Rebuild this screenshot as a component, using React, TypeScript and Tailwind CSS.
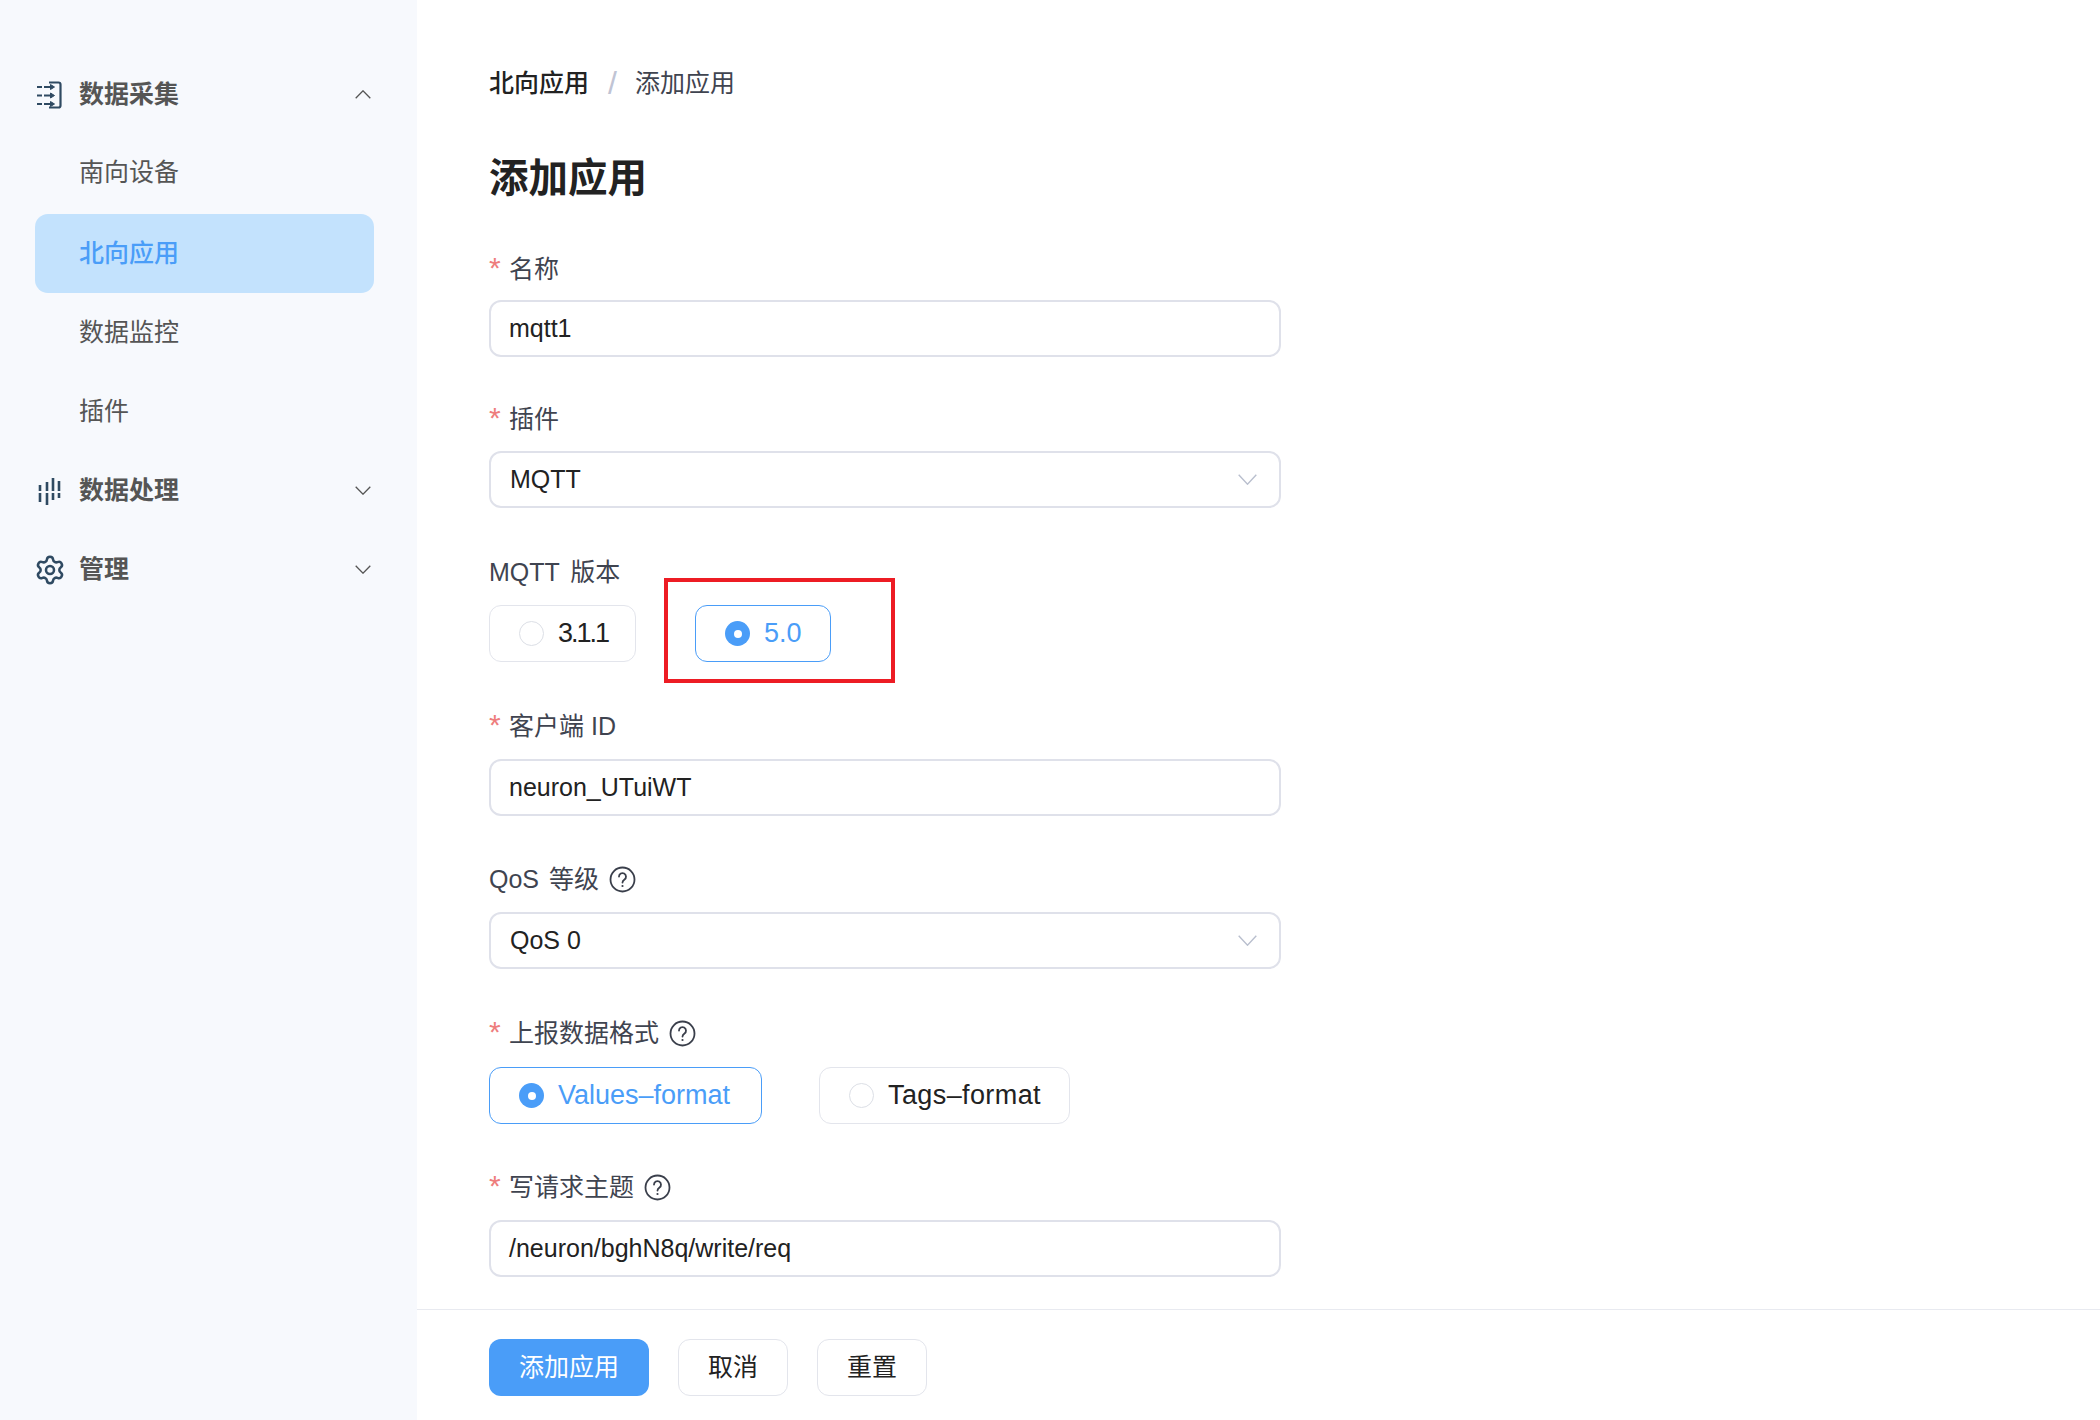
import React from "react";
import { Settings } from "lucide-react";

const font = "font-['Liberation_Sans','Noto_Sans_CJK_SC',sans-serif]";

function ListIcon() {
  return (
    <svg width="28" height="28" viewBox="0 0 28 28" fill="none" stroke="#2f4a62" strokeWidth="2.200" className="ml-px">
      <path d="M13 1.500h9.500a2 2 0 0 1 2 2v21a2 2 0 0 1-2 2H13" />
      <path d="M1 6h5M8 6h6M1 14.500h5M8 14.500h6M1 23h5M8 23h6" />
      <path d="M14.500 3.500l4 2.500-4 2.500zM14.500 12l4 2.500-4 2.500zM14.500 20.500l4 2.500-4 2.500z" fill="#2f4a62" strokeWidth="1" />
    </svg>
  );
}

function BarsIcon() {
  return (
    <svg width="28" height="28" viewBox="0 0 28 28" fill="none" stroke="#2f4a62" strokeWidth="2.600" className="ml-px">
      <path d="M4 8v6M4 16v9M11 5v9M11 16v12M17 1v13M17 16v7M23 4v10M23 16v5" />
    </svg>
  );
}

function Chevron({ up, color, w, h, sw }: { up?: boolean; color: string; w: number; h: number; sw: number }) {
  return (
    <svg width={w} height={h} viewBox={`0 0 ${w} ${h}`} fill="none" stroke={color} strokeWidth={sw}>
      <path d={up ? `M0.700 ${h - 0.700}L${w / 2} 0.800L${w - 0.700} ${h - 0.700}` : `M0.700 0.700L${w / 2} ${h - 0.800}L${w - 0.700} 0.700`} />
    </svg>
  );
}

function Help() {
  return (
    <svg width="27" height="27" viewBox="0 0 27 27" fill="none" stroke="#3a3f4b" strokeWidth="1.800" className="ml-[10px]">
      <circle cx="13.500" cy="13.500" r="12" />
      <path d="M10 10.500a3.500 3.500 0 1 1 5.500 3c-1.300.9-2 1.600-2 3" strokeLinecap="round" />
      <circle cx="13.500" cy="20" r="1.100" fill="#3a3f4b" stroke="none" />
    </svg>
  );
}

function NavGroup({ icon, title, open }: { icon: React.ReactNode; title: string; open?: boolean }) {
  return (
    <div className="flex h-[79px] items-center pl-[35px] pr-[46px]">
      <div className="flex w-[44px] items-center">{icon}</div>
      <span className="flex-1 text-[25px] font-bold leading-none text-[#555555]">{title}</span>
      <Chevron up={open} color="#555555" w={16} h={9} sw={1.300} />
    </div>
  );
}

function NavItem({ title, active }: { title: string; active?: boolean }) {
  return (
    <div
      className={
        active
          ? "ml-[35px] mr-[43px] flex h-[79px] items-center rounded-[13px] bg-[#c3e2fd] pl-[44px] text-[25px] font-medium text-[#4a9df8]"
          : "ml-[35px] mr-[43px] flex h-[79px] items-center pl-[44px] text-[25px] text-[#555555]"
      }
    >
      {title}
    </div>
  );
}

function Label({ text, required, help, className }: { text: string; required?: boolean; help?: boolean; className?: string }) {
  return (
    <div className={"flex h-[32px] items-center text-[25px] leading-none text-[#3f4450] " + (className ?? "")}>
      {required && <span className="mr-[7px] w-[13px] translate-y-[-1px] text-[30px] leading-none text-[#ee7d7d]">*</span>}
      <span>{text}</span>
      {help && <Help />}
    </div>
  );
}

function Input({ value }: { value: string }) {
  return (
    <div className="flex h-[57px] w-[792px] items-center rounded-[12px] border-2 border-[#dfe1ea] bg-white pl-[18px] text-[25px] text-[#222222]">
      {value}
    </div>
  );
}

function Select({ value }: { value: string }) {
  return (
    <div className="flex h-[57px] w-[792px] items-center justify-between rounded-[12px] border-2 border-[#dfe1ea] bg-white pl-[19px] pr-[22px] text-[25px] text-[#222222]">
      <span>{value}</span>
      <Chevron color="#b9bfce" w={19} h={11} sw={1.400} />
    </div>
  );
}

function Radio({ label, checked, className }: { label: string; checked?: boolean; className: string }) {
  return (
    <div
      className={
        "flex h-[57px] items-center rounded-[12px] border pl-[29px] text-[27px] " +
        (checked ? "border-[#4a9df8] text-[#4a9df8] " : "border-[#e3e5ec] text-[#222222] ") +
        className
      }
    >
      {checked ? (
        <span className="mr-[14px] flex h-[25px] w-[25px] items-center justify-center rounded-full bg-[#4a9df8]">
          <span className="h-[8px] w-[8px] rounded-full bg-white" />
        </span>
      ) : (
        <span className="mr-[14px] h-[25px] w-[25px] rounded-full border border-[#dcdfe6] bg-white" />
      )}
      {label}
    </div>
  );
}

export default function App() {
  return (
    <div className={"flex h-[1420px] w-[2100px] overflow-hidden bg-white " + font}>
      <aside className="w-[417px] shrink-0 bg-[#f7f9fd] pt-[55px]">
        <NavGroup icon={<ListIcon />} title="数据采集" open />
        <div className="-mt-px mb-[2px]">
          <NavItem title="南向设备" />
        </div>
        <NavItem title="北向应用" active />
        <NavItem title="数据监控" />
        <NavItem title="插件" />
        <NavGroup icon={<BarsIcon />} title="数据处理" />
        <NavGroup icon={<span className="-ml-px"><Settings size={32} strokeWidth={1.900} color="#2f4a62" /></span>} title="管理" />
      </aside>

      <main className="relative flex min-w-0 flex-1 flex-col">
        <div className="flex-1 pl-[72px] pt-[67px]">
          <div className="flex h-[32px] items-center text-[25px] leading-none">
            <span className="font-medium text-[#222222]">北向应用</span>
            <span className="ml-[19px] mr-[18px] text-[32px] font-medium text-[#c0c4d4]">/</span>
            <span className="text-[#3f4450]">添加应用</span>
          </div>
          <h1 className="mt-[57px] flex h-[46px] items-center text-[39.500px] font-bold leading-none text-[#222222]">添加应用</h1>

          <div className="mt-[51px]">
            <Label text="名称" required />
            <div className="mt-[15px]"><Input value="mqtt1" /></div>
          </div>
          <div className="mt-[46px]">
            <Label text="插件" required />
            <div className="mt-[16px]"><Select value="MQTT" /></div>
          </div>
          <div className="mt-[48px]">
            <Label text="MQTT 版本" className="[word-spacing:4px]" />
            <div className="mt-[17px] flex">
              <Radio label="3.1.1" className="w-[147px] tracking-[-2px]" />
              <Radio label="5.0" checked className="ml-[59px] w-[136px]" />
            </div>
          </div>
          <div className="mt-[48px]">
            <Label text="客户端 ID" required />
            <div className="mt-[17px]"><Input value="neuron_UTuiWT" /></div>
          </div>
          <div className="mt-[47px]">
            <Label text="QoS 等级" help className="[word-spacing:3px]" />
            <div className="mt-[17px]"><Select value="QoS 0" /></div>
          </div>
          <div className="mt-[48px]">
            <Label text="上报数据格式" required help />
            <div className="mt-[18px] flex">
              <Radio label="Values–format" checked className="w-[273px]" />
              <Radio label="Tags–format" className="ml-[57px] w-[251px] tracking-[0.400px]" />
            </div>
          </div>
          <div className="mt-[47px]">
            <Label text="写请求主题" required help />
            <div className="mt-[17px]"><Input value="/neuron/bghN8q/write/req" /></div>
          </div>
        </div>

        <div className="flex h-[111px] items-start border-t border-[#e8eaf0] pl-[72px] pt-[29px]">
          <button className="h-[57px] w-[160px] rounded-[12px] bg-[#4a9df8] text-[25px] text-white">添加应用</button>
          <button className="ml-[29px] h-[57px] w-[110px] rounded-[12px] border border-[#e3e5ec] bg-white text-[25px] text-[#222222]">取消</button>
          <button className="ml-[29px] h-[57px] w-[110px] rounded-[12px] border border-[#e3e5ec] bg-white text-[25px] text-[#222222]">重置</button>
        </div>

        <div className="absolute left-[247px] top-[578px] h-[105px] w-[231px] border-4 border-[#ed1c24]" />
      </main>
    </div>
  );
}
